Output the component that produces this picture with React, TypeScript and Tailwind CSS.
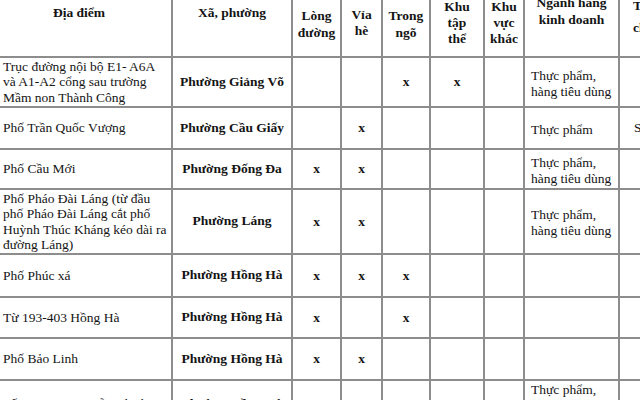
import React from "react";

const serif = "font-['Liberation_Serif','Times_New_Roman',serif]";

type Row = {
  place: string[];
  ward: string;
  marks: [boolean, boolean, boolean, boolean, boolean];
  trade: string[];
  extra?: string;
};

const rows: Row[] = [
  {
    place: ["Trục đường nội bộ E1- A6A", "và A1-A2 cổng sau trường", "Mầm non Thành Công"],
    ward: "Phường Giảng Võ",
    marks: [false, false, true, true, false],
    trade: ["Thực phẩm,", "hàng tiêu dùng"],
  },
  {
    place: ["Phố Trần Quốc Vượng"],
    ward: "Phường Cầu Giấy",
    marks: [false, true, false, false, false],
    trade: ["Thực phẩm"],
    extra: "Sáng",
  },
  {
    place: ["Phố Cầu Mới"],
    ward: "Phường Đống Đa",
    marks: [true, true, false, false, false],
    trade: ["Thực phẩm,", "hàng tiêu dùng"],
  },
  {
    place: [
      "Phố Pháo Đài Láng (từ đầu",
      "phố Pháo Đài Láng cắt phố",
      "Huỳnh Thúc Kháng kéo dài ra",
      "đường Láng)",
    ],
    ward: "Phường Láng",
    marks: [true, true, false, false, false],
    trade: ["Thực phẩm,", "hàng tiêu dùng"],
  },
  {
    place: ["Phố Phúc xá"],
    ward: "Phường Hồng Hà",
    marks: [true, true, true, false, false],
    trade: [],
  },
  {
    place: ["Từ 193-403 Hồng Hà"],
    ward: "Phường Hồng Hà",
    marks: [true, false, true, false, false],
    trade: [],
  },
  {
    place: ["Phố Bảo Linh"],
    ward: "Phường Hồng Hà",
    marks: [true, true, false, false, false],
    trade: [],
  },
  {
    place: ["Số 403-513 Nguyễn Khoái"],
    ward: "Phường Hồng Hà",
    marks: [true, true, false, false, false],
    trade: ["Thực phẩm,", "hàng tiêu dùng,", "đồ gia dụng"],
  },
];

function Mark({ on }: { on: boolean }) {
  return (
    <div className="bg-white flex items-center justify-center">
      {on ? <span className="font-bold text-[13.5px] leading-none">x</span> : null}
    </div>
  );
}

export default function App() {
  return (
    <div className={`w-[640px] h-[400px] overflow-hidden bg-white text-[#141414] ${serif}`}>
      <div className="grid w-[720px] gap-[2px] bg-[#8d8d8d] grid-cols-[171px_118px_47px_39px_46px_52px_38px_93px_100px] grid-rows-[56px_48px_40px_38px_63px_41px_39px_40px_46px] text-[13.5px]">
        {/* Header */}
        <div className="bg-white flex flex-col items-center pt-[5px] pr-[13px] font-bold leading-[16px]">
          <span>Địa điểm</span>
        </div>
        <div className="bg-white flex flex-col items-center pt-[5px] font-bold leading-[16px]">
          <span>Xã, phường</span>
        </div>
        <div className="bg-white flex flex-col items-center pt-[7px] font-bold leading-[17px]">
          <span>Lòng</span>
          <span>đường</span>
        </div>
        <div className="bg-white flex flex-col items-center pt-[7px] font-bold leading-[16px]">
          <span>Vỉa</span>
          <span>hè</span>
        </div>
        <div className="bg-white flex flex-col items-center pt-[7px] font-bold leading-[17px]">
          <span>Trong</span>
          <span>ngõ</span>
        </div>
        <div className="bg-white flex flex-col items-center -mt-[1px] font-bold leading-[16px] overflow-hidden">
          <span>Khu</span>
          <span>tập</span>
          <span>thể</span>
        </div>
        <div className="bg-white flex flex-col items-center -mt-[1px] font-bold leading-[16px] overflow-hidden">
          <span>Khu</span>
          <span>vực</span>
          <span>khác</span>
        </div>
        <div className="bg-white overflow-hidden">
          <div className="flex flex-col items-center -mt-[5px] font-bold leading-[16.5px]">
            <span>Ngành hàng</span>
            <span>kinh doanh</span>
          </div>
        </div>
        <div className="bg-white overflow-hidden">
          <div className="flex flex-col items-start -mt-[5px] pl-[13px] font-bold leading-[22px]">
            <span>Thời gian</span>
            <span>cho phép</span>
          </div>
        </div>

        {/* Body */}
        {rows.map((r, i) => (
          <React.Fragment key={i}>
            <div className="bg-white flex flex-col justify-center pl-[3px] leading-[15.5px] whitespace-nowrap overflow-hidden">
              {r.place.map((l, j) => (
                <span key={j}>{l}</span>
              ))}
            </div>
            <div className="bg-white flex items-center justify-center font-bold whitespace-nowrap">
              {r.ward}
            </div>
            {r.marks.map((m, j) => (
              <Mark key={j} on={m} />
            ))}
            <div className="bg-white flex flex-col justify-center pl-[6px] pt-[3px] leading-[16px] whitespace-nowrap">
              {r.trade.map((l, j) => (
                <span key={j}>{l}</span>
              ))}
            </div>
            <div className="bg-white flex items-center pl-[14px] whitespace-nowrap">
              {r.extra ? <span>{r.extra}</span> : null}
            </div>
          </React.Fragment>
        ))}
      </div>
    </div>
  );
}
